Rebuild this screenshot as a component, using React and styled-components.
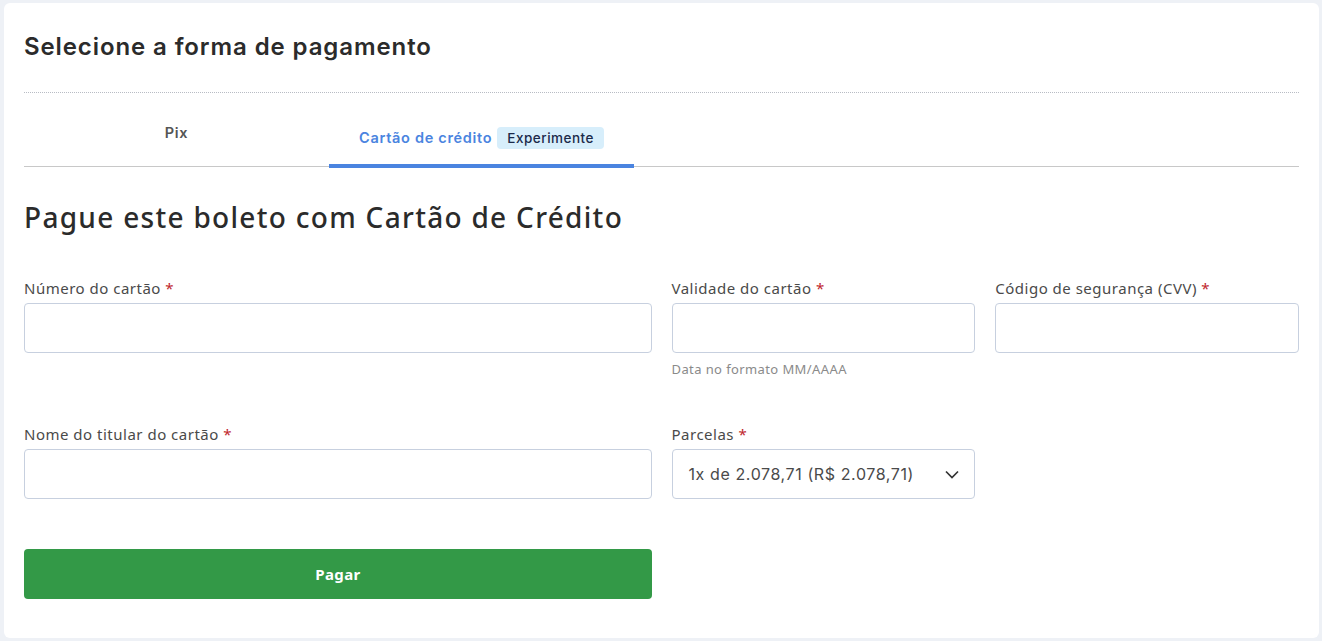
import React from "react";
import styled, { createGlobalStyle } from "styled-components";

const Global = createGlobalStyle`
  html, body { margin: 0; padding: 0; background: #eef1f6; }
  body { font-family: "Noto Sans", "Open Sans", sans-serif; color: #333; }
  * { box-sizing: border-box; }
`;

const Page = styled.div`
  padding: 3px 3px 3px 4px;
  min-height: 641px;
`;

const Card = styled.div`
  background: #fff;
  border-radius: 6px;
  padding: 0 20px 39px 20px;
  min-height: 635px;
`;

const Title = styled.h1`
  margin: 0;
  padding: 31px 0 32px 0;
  font-family: Inter, "Noto Sans", sans-serif;
  font-weight: 600;
  font-size: 24px;
  letter-spacing: 0.9px;
  color: #2b2b2b;
  line-height: 26px;
  border-bottom: 1px dotted #b8bcc4;
`;

const Tabs = styled.div`
  display: flex;
  border-bottom: 1px solid #c8c8c8;
  height: 74px;
`;

const Tab = styled.div`
  width: 305px;
  display: flex;
  align-items: center;
  justify-content: center;
  gap: 5px;
  font-family: Inter, "Noto Sans", sans-serif;
  font-size: 14.5px;
  letter-spacing: 0.7px;
  font-weight: 600;
  color: ${(p) => (p.$active ? "#4a84e0" : "#555")};
  border-bottom: ${(p) => (p.$active ? "4px solid #4a84e0" : "none")};
  margin-bottom: ${(p) => (p.$active ? "-2px" : "0")};
  padding-top: ${(p) => (p.$active ? "18px" : "6px")};
`;

const Badge = styled.span`
  background: #d7eefb;
  color: #1b2a4a;
  border-radius: 4px;
  padding: 3px 10px;
  font-size: 13.5px;
  letter-spacing: 0.5px;
  font-weight: 500;
  line-height: 16px;
`;

const Heading = styled.h2`
  margin: 0;
  padding: 33px 0 0 0;
  font-family: "Noto Sans", sans-serif;
  font-weight: 500;
  font-size: 28px;
  letter-spacing: 1.3px;
  line-height: 34px;
  color: #2b2b2b;
`;

const Form = styled.div`
  display: grid;
  grid-template-columns: 1fr 1fr;
  grid-template-rows: 146px auto;
  column-gap: 20px;
  margin-top: 44px;
`;

const SubGrid = styled.div`
  display: grid;
  grid-template-columns: 1fr 1fr;
  column-gap: 20px;
  align-items: start;
`;

const Field = styled.div`
  display: flex;
  flex-direction: column;
`;

const Label = styled.label`
  font-size: 15px;
  letter-spacing: 0.5px;
  color: #4a4a4a;
  line-height: 20px;
  margin-bottom: 5px;
  span { color: #c0262d; }
`;

const Input = styled.div`
  height: 50px;
  border: 1px solid #c7d0df;
  border-radius: 4px;
  background: #fff;
  display: flex;
  align-items: center;
  justify-content: space-between;
  padding: 0 14px 0 16px;
  font-family: Inter, "Noto Sans", sans-serif;
  font-size: 16px;
  letter-spacing: 0.6px;
  color: #4a4a4a;
`;

const Hint = styled.div`
  margin-top: 7px;
  font-size: 13px;
  letter-spacing: 0.4px;
  color: #8a8a8a;
`;

const Button = styled.button`
  margin-top: 50px;
  width: 628px;
  height: 50px;
  background: #339947;
  border: none;
  border-radius: 4px;
  color: #fff;
  font-family: "Noto Sans", sans-serif;
  font-weight: 700;
  font-size: 15px;
  letter-spacing: 0.4px;
`;

const Req = () => <span>*</span>;

export default function App() {
  return (
    <>
      <Global />
      <Page>
        <Card>
          <Title>Selecione a forma de pagamento</Title>
          <Tabs>
            <Tab>Pix</Tab>
            <Tab $active>
              Cartão de crédito <Badge>Experimente</Badge>
            </Tab>
          </Tabs>
          <Heading>Pague este boleto com Cartão de Crédito</Heading>
          <Form>
            <Field>
              <Label>Número do cartão <Req /></Label>
              <Input />
            </Field>
            <SubGrid>
              <Field>
                <Label>Validade do cartão <Req /></Label>
                <Input />
                <Hint>Data no formato MM/AAAA</Hint>
              </Field>
              <Field>
                <Label>Código de segurança (CVV) <Req /></Label>
                <Input />
              </Field>
            </SubGrid>
            <Field>
              <Label>Nome do titular do cartão <Req /></Label>
              <Input />
            </Field>
            <SubGrid>
              <Field>
                <Label>Parcelas <Req /></Label>
                <Input>
                  1x de 2.078,71 (R$ 2.078,71)
                  <svg width="16" height="16" viewBox="0 0 16 16" fill="none">
                    <path d="M2 5.5l6 6 6-6" stroke="#333" strokeWidth="1.7" />
                  </svg>
                </Input>
              </Field>
            </SubGrid>
          </Form>
          <Button>Pagar</Button>
        </Card>
      </Page>
    </>
  );
}
